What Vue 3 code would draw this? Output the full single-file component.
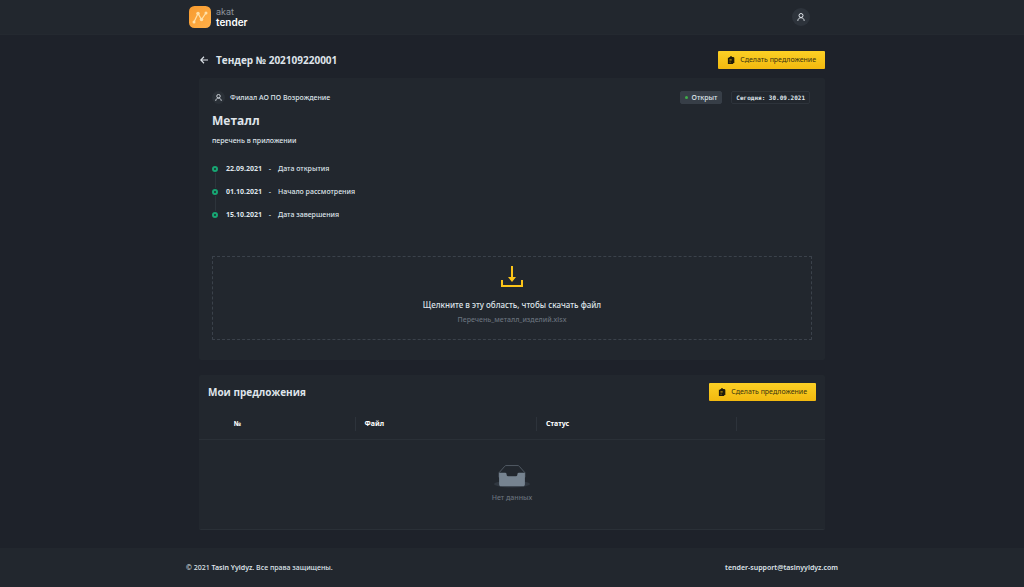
<script setup>
import { h } from 'vue'

const tender = {
  number: '202109220001',
  branch: 'Филиал АО ПО Возрождение',
  title: 'Металл',
  description: 'перечень в приложении',
  today: '30.09.2021',
  file: 'Перечень_металл_изделий.xlsx',
}

const dates = [
  { date: '22.09.2021', label: 'Дата открытия' },
  { date: '01.10.2021', label: 'Начало рассмотрения' },
  { date: '15.10.2021', label: 'Дата завершения' },
]

const UserIcon = () =>
  h('svg', { viewBox: '0 0 16 16', fill: 'none', stroke: 'currentColor', 'stroke-width': 2, 'aria-hidden': 'true' }, [
    h('circle', { cx: 8, cy: 5, r: 4 }),
    h('path', { d: 'M1.600 15.700c.3-4 2.800-6.300 6.400-6.300s6.100 2.300 6.400 6.300' }),
  ])

const ClipIcon = () =>
  h('svg', { viewBox: '0 0 16 18', 'aria-hidden': 'true' }, [
    h('path', { fill: 'currentColor', d: 'M4 2h2V.5h4V2h3.500L15.500 4v11.500H13V18H1V4h3z' }),
    h('path', { fill: '#b28c0d', d: 'M4.500 7h5v1.500h-5zM4.500 10h5v1.500h-5zM4.500 13h3v1.500h-3z' }),
  ])
</script>

<template>
  <div class="page">
    <header class="topbar">
      <div class="wrap topbar-inner">
        <a class="logo" href="#" aria-label="akat tender">
          <svg class="logo-mark" viewBox="0 0 44 44" aria-hidden="true">
            <defs>
              <linearGradient id="mark" x1="0" y1="0" x2="1" y2="1">
                <stop offset="0" stop-color="#f79a2e" />
                <stop offset="1" stop-color="#ffb04a" />
              </linearGradient>
            </defs>
            <rect width="44" height="44" rx="11" fill="url(#mark)" />
            <path d="M10 32L18 15L25 27L34 14" fill="none" stroke="#ffe0a8" stroke-width="2.500" />
            <g fill="#ffe0a8">
              <circle cx="10" cy="32" r="3" />
              <circle cx="18" cy="15" r="3.500" />
              <circle cx="25" cy="27" r="3.500" />
              <circle cx="34" cy="14" r="3" />
            </g>
          </svg>
          <span class="logo-text"><span class="logo-top">akat</span><span class="logo-bottom">tender</span></span>
        </a>
        <button class="avatar" type="button" aria-label="Профиль"><UserIcon /></button>
      </div>
    </header>

    <main class="content">
      <div class="heading">
        <button class="back" type="button" aria-label="Назад">
          <svg viewBox="0 0 16 16" fill="none" stroke="currentColor" stroke-width="2.200" aria-hidden="true">
            <path d="M16 8H1.500M8 1.500L1.500 8l6.500 6.500" />
          </svg>
        </button>
        <h1>Тендер № {{ tender.number }}</h1>
        <button class="primary" type="button"><ClipIcon />Сделать предложение</button>
      </div>

      <section class="card details">
        <div class="meta">
          <span class="author-icon"><UserIcon /></span>
          <span class="author">{{ tender.branch }}</span>
          <span class="status"><i class="dot"></i>Открыт</span>
          <span class="today">Сегодня: {{ tender.today }}</span>
        </div>
        <h2>{{ tender.title }}</h2>
        <p class="description">{{ tender.description }}</p>
        <ol class="timeline">
          <li v-for="item in dates" :key="item.date">
            <strong>{{ item.date }}</strong><span class="dash">-</span><span>{{ item.label }}</span>
          </li>
        </ol>
        <button class="download" type="button">
          <svg viewBox="0 0 22 22" aria-hidden="true">
            <path fill="#fcc419" d="M10 0h2v11h3l-4 5-4-5h3zM0 14h2v5h18v-5h2v7H0z" />
          </svg>
          <span class="download-title">Щелкните в эту область, чтобы скачать файл</span>
          <span class="download-file">{{ tender.file }}</span>
        </button>
      </section>

      <section class="card offers">
        <div class="offers-head">
          <h2>Мои предложения</h2>
          <button class="primary" type="button"><ClipIcon />Сделать предложение</button>
        </div>
        <table>
          <colgroup>
            <col class="col-number" />
            <col class="col-file" />
            <col class="col-status" />
            <col />
          </colgroup>
          <thead>
            <tr>
              <th class="number" scope="col">№</th>
              <th scope="col">Файл</th>
              <th scope="col">Статус</th>
              <td></td>
            </tr>
          </thead>
          <tbody>
            <tr>
              <td class="empty" colspan="4">
                <svg viewBox="0 0 64 41" aria-hidden="true">
                  <ellipse cx="32" cy="34" rx="32" ry="6" fill="#303740" />
                  <path d="M55 13.700L44.900 2.300C44.400 1.500 43.600 1 42.800 1H21.200c-.8 0-1.600.5-2.100 1.300L9 13.700V22h46z" fill="#22272e" stroke="#59636e" stroke-width="1.500" />
                  <path d="M41.600 17c0-1.700 1-3 2.200-3H55v20.100c0 2-1.300 3.900-3.200 3.900H12.200C10.300 38 9 36.100 9 34.100V14h11.200c1.200 0 2.200 1.300 2.200 3s1 3 2.200 3h14.800c1.200 0 2.200-1.300 2.200-3z" fill="#768390" />
                </svg>
                Нет данных
              </td>
            </tr>
          </tbody>
        </table>
      </section>
    </main>

    <footer class="footer">
      <div class="footer-inner">
        <span>© 2021 <b>Tasin Yyldyz.</b> Все права защищены.</span>
        <a href="mailto:tender-support@tasinyyldyz.com">tender-support@tasinyyldyz.com</a>
      </div>
    </footer>
  </div>
</template>

<style>
body {
  background: #1e222a;
}
</style>

<style scoped>
*,
*::before,
*::after {
  box-sizing: border-box;
}
.page {
  min-height: 100vh;
  display: flex;
  flex-direction: column;
  background: #1e222a;
  color: #dfe4ea;
  font: 500 7px/12px "Noto Sans", "Open Sans", sans-serif;
}
h1,
h2,
p,
ol {
  margin: 0;
  padding: 0;
}
button {
  font: inherit;
  color: inherit;
  border: 0;
  padding: 0;
  background: none;
  cursor: pointer;
}
a {
  color: inherit;
  text-decoration: none;
}
.topbar {
  background: #22272e;
  border-bottom: 1px solid #242930;
}
.wrap {
  width: 100%;
  max-width: 646px;
  margin: 0 auto;
}
.topbar-inner {
  height: 34px;
  display: flex;
  align-items: center;
  justify-content: space-between;
  padding-right: 25px;
}
.logo {
  display: flex;
  align-items: center;
  gap: 5px;
}
.logo-mark {
  width: 22px;
  height: 22px;
}
.logo-text {
  display: flex;
  flex-direction: column;
}
.logo-top {
  font: 400 9px/10px Inter, sans-serif;
  color: #8d949d;
}
.logo-bottom {
  font: 600 10px/10px Inter, sans-serif;
  color: #fff;
}
.avatar {
  display: grid;
  place-items: center;
  width: 18px;
  height: 18px;
  border-radius: 50%;
  background: #2d333b;
}
.avatar svg {
  width: 8px;
  height: 8px;
}
.content {
  width: 100%;
  max-width: 626px;
  margin: 0 auto;
  padding: 16px 0 18px;
}
.heading {
  display: flex;
  align-items: center;
  gap: 8px;
  margin-bottom: 9px;
}
.back {
  display: flex;
  padding-left: 1px;
}
.back svg {
  width: 8px;
  height: 8px;
}
h1 {
  flex: 1;
  font: 700 10px/16px "Open Sans", "Noto Sans", sans-serif;
}
.primary {
  display: flex;
  align-items: center;
  gap: 5px;
  height: 18px;
  padding: 0 9px;
  border-radius: 1px;
  background: linear-gradient(#fcd025, #f2b90f);
  color: #3b3210;
  font-weight: 400;
}
.primary svg {
  width: 8px;
  height: 8px;
  color: #1f1b0a;
}
.card {
  background: #22272e;
  border-radius: 2px;
}
.details {
  padding: 13px 13px 20px;
  margin-bottom: 15px;
}
.meta {
  display: flex;
  align-items: center;
  height: 13px;
}
.author-icon {
  display: grid;
  place-items: center;
  width: 13px;
  height: 13px;
  border-radius: 50%;
  background: #2a3037;
}
.author-icon svg {
  width: 7px;
  height: 7px;
}
.author {
  margin: 0 auto 0 5px;
}
.status,
.today {
  height: 13px;
  display: flex;
  align-items: center;
  border: 1px solid #2d333b;
  border-radius: 2px;
  padding: 0 4px;
}
.status {
  background: #373e47;
  border-color: #373e47;
  gap: 4px;
  margin-right: 9px;
}
.dot {
  width: 3px;
  height: 3px;
  border-radius: 50%;
  background: #3fae49;
}
.today {
  font: 700 6px/8px "DejaVu Sans Mono", monospace;
  margin-right: 2px;
}
.details h2 {
  margin-top: 7px;
  font: 700 12px/20px "Open Sans", "Noto Sans", sans-serif;
}
.description {
  margin-top: 4px;
}
.timeline {
  list-style: none;
  margin: 16px 0 24px;
}
.timeline li {
  position: relative;
  display: flex;
  height: 23px;
  padding-left: 14px;
}
.timeline li::before {
  content: "";
  position: absolute;
  left: 0;
  top: 3px;
  width: 6px;
  height: 6px;
  border: 2px solid #17a673;
  border-radius: 50%;
}
.timeline li:not(:last-child)::after {
  content: "";
  position: absolute;
  left: 3px;
  top: 10px;
  width: 1px;
  height: 15px;
  background: #2d343b;
}
strong {
  font-weight: 700;
}
.dash {
  width: 16px;
  text-align: center;
}
.download {
  width: 100%;
  display: flex;
  flex-direction: column;
  align-items: center;
  padding: 9px 0 13px;
  border: 1px dashed #3b424b;
  border-radius: 1px;
}
.download svg {
  width: 22px;
  height: 22px;
}
.download-title {
  margin-top: 11px;
  font-size: 8px;
}
.download-file {
  margin-top: 3px;
  color: #68717c;
}
.offers {
  border-bottom: 1px solid #2a3037;
}
.offers-head {
  display: flex;
  align-items: center;
  justify-content: space-between;
  padding: 8px 9px;
}
.offers-head h2 {
  font: 700 10px/16px "Open Sans", "Noto Sans", sans-serif;
}
table {
  width: 100%;
  table-layout: fixed;
  border-collapse: collapse;
}
.col-number {
  width: 25%;
}
.col-file {
  width: 29%;
}
.col-status {
  width: 32%;
}
thead tr {
  height: 30px;
  border-bottom: 1px solid #2a3037;
}
th {
  padding: 0 9px;
  text-align: left;
  font-weight: 700;
  color: #fff;
  background: linear-gradient(#2d333b, #2d333b) right center / 1px 14px no-repeat;
}
.number {
  padding-left: 35px;
}
.empty {
  padding: 25px 0;
  text-align: center;
  color: #68717c;
}
.empty svg {
  display: block;
  width: 36px;
  height: 23px;
  margin: 0 auto 4px;
}
.footer {
  margin-top: auto;
  background: #22272e;
}
.footer-inner {
  max-width: 652px;
  height: 39px;
  margin: 0 auto;
  display: flex;
  align-items: center;
  justify-content: space-between;
}
.footer b,
.footer a {
  font-weight: 600;
}
</style>
